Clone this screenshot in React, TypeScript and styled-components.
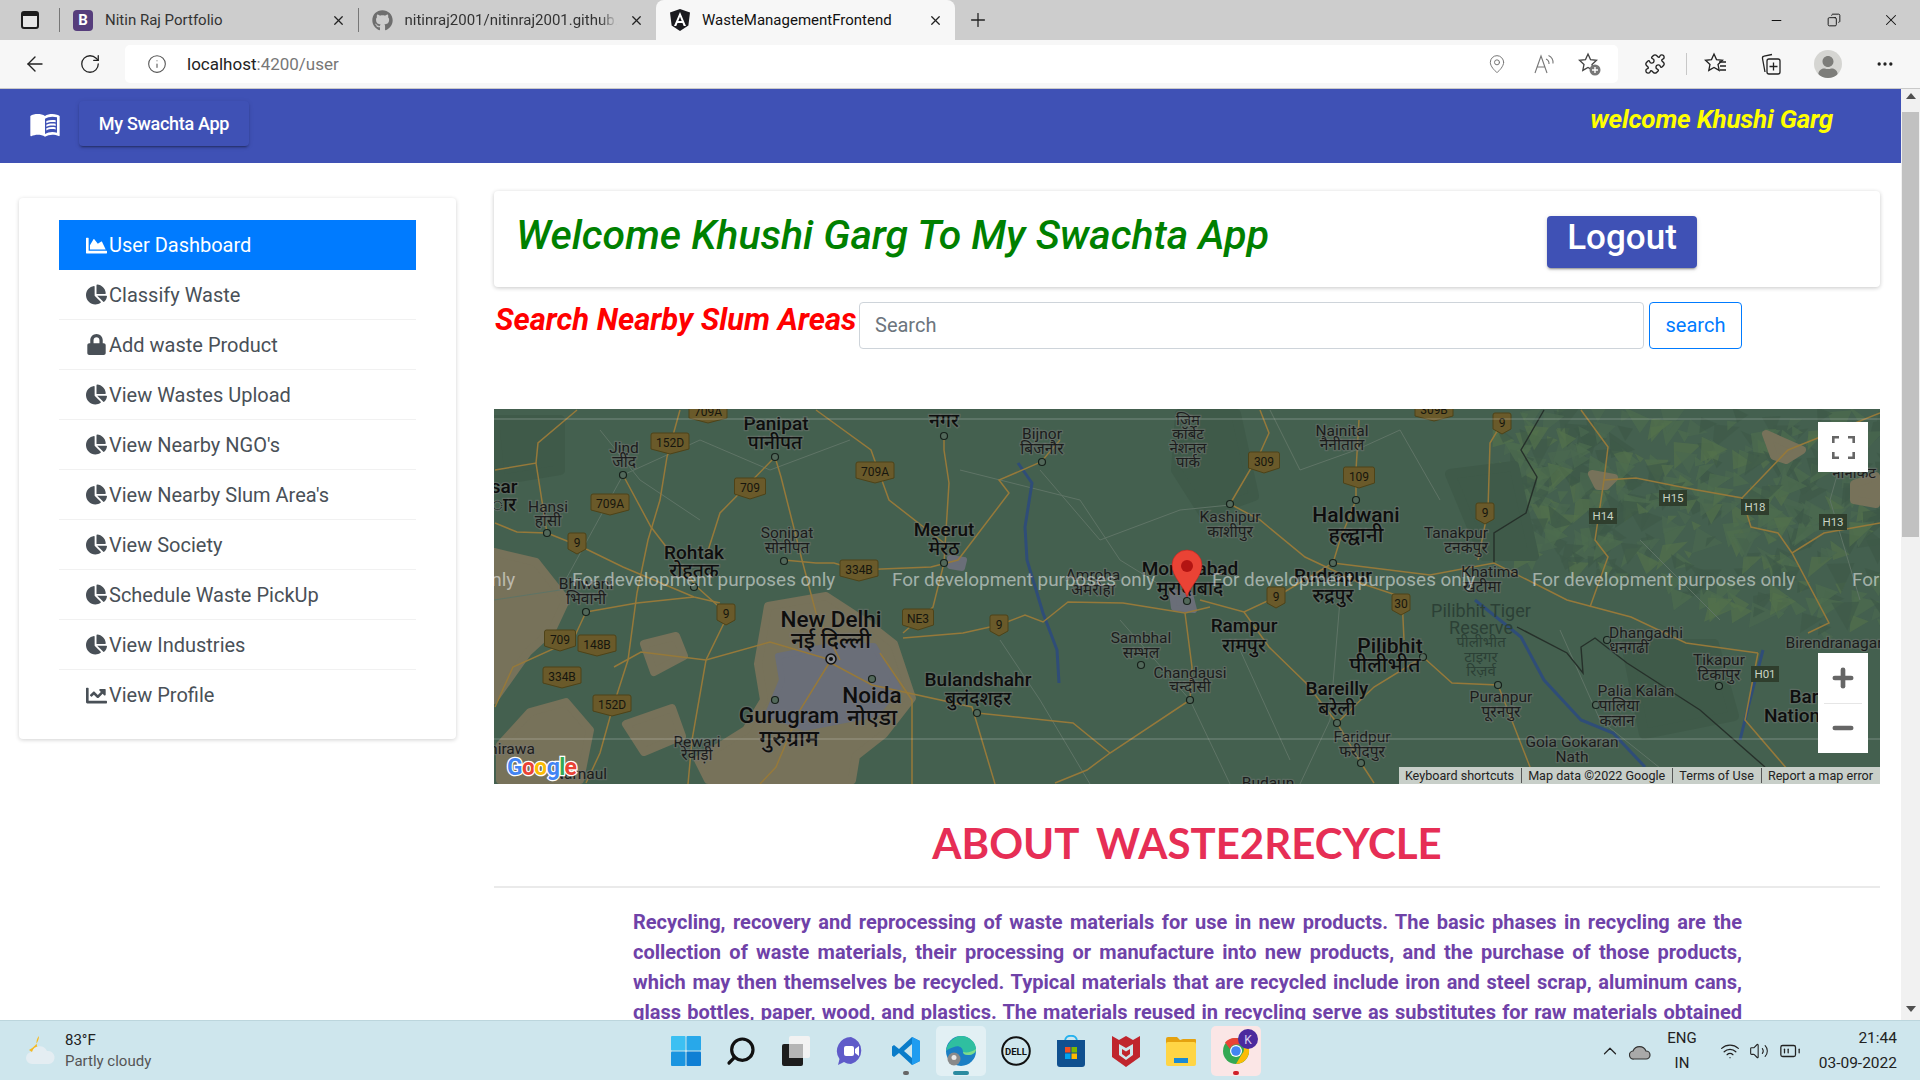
import React from "react";
import styled, { createGlobalStyle } from "styled-components";
import {
  ArrowLeft,
  RotateCw,
  Info,
  MapPin,
  MoreHorizontal,
  X,
  Plus,
  Minus,
  Copy,
  Puzzle,
  Wifi,
  Volume2,
  BatteryMedium,
  ChevronUp,
  Search,
} from "lucide-react";
import { FaChartArea, FaChartPie, FaChartLine, FaLock, FaGithub, FaUser } from "react-icons/fa";
import { MdMenuBook } from "react-icons/md";

const GlobalStyle = createGlobalStyle`
  html, body { margin: 0; padding: 0; height: 100%; overflow: hidden; background: #fff; }
  * { box-sizing: border-box; }
  body { font-family: Roboto, "Liberation Sans", sans-serif; }
`;

const Screen = styled.div`
  width: 1920px;
  height: 1080px;
  display: flex;
  flex-direction: column;
  overflow: hidden;
`;

/* ---------- browser chrome ---------- */
const TabStrip = styled.div`
  height: 40px;
  flex: none;
  display: flex;
  align-items: stretch;
  background: #cdcdcd;
`;
const TabMenu = styled.div`
  width: 59px;
  display: flex;
  align-items: center;
  justify-content: center;
`;
const SideTabIcon = styled.div`
  width: 18px;
  height: 18px;
  border: 2px solid #1c1c1c;
  border-top-width: 5px;
  border-radius: 3px;
  background: #e6e6e6;
`;
const Tab = styled.div<{ $active?: boolean }>`
  width: 298.5px;
  display: flex;
  align-items: center;
  gap: 12px;
  padding: 0 12px 0 14px;
  font-size: 15px;
  color: ${(p) => (p.$active ? "#111" : "#333")};
  background: ${(p) => (p.$active ? "#f7f7f7" : "transparent")};
  border-radius: ${(p) => (p.$active ? "8px 8px 0 0" : "0")};
  position: relative;
  &::before {
    content: "";
    display: ${(p) => (p.$active ? "none" : "block")};
    position: absolute;
    left: 0;
    top: 8px;
    bottom: 8px;
    width: 1px;
    background: #777;
  }
`;
const TabLabel = styled.span<{ $fade?: boolean }>`
  flex: 1;
  overflow: hidden;
  white-space: nowrap;
  ${(p) => (p.$fade ? "mask-image: linear-gradient(to right, #000 92%, transparent);" : "")}
`;
const BootstrapIcon = styled.span`
  width: 20px;
  height: 21px;
  flex: none;
  border-radius: 4px;
  background: #563d7c;
  color: #fff;
  font-size: 15px;
  font-weight: 700;
  display: flex;
  align-items: center;
  justify-content: center;
`;
const NewTab = styled.div`
  width: 46px;
  display: flex;
  align-items: center;
  justify-content: center;
`;
const WindowButtons = styled.div`
  margin-left: auto;
  display: flex;
  align-items: center;
`;
const WindowButton = styled.div`
  width: 57.5px;
  display: flex;
  justify-content: center;
`;
const AddressBar = styled.div`
  height: 49px;
  flex: none;
  display: flex;
  align-items: center;
  padding-left: 7px;
  background: #f7f7f7;
  border-bottom: 1px solid #c9c9c9;
`;
const ToolSlot = styled.div<{ $w: number }>`
  width: ${(p) => p.$w}px;
  flex: none;
  height: 38px;
  display: flex;
  align-items: center;
  justify-content: center;
  color: #222;
`;
const Omnibox = styled.div`
  width: 1493px;
  height: 38px;
  margin: 0 6px 0 8px;
  background: #fff;
  border-radius: 5px;
  display: flex;
  align-items: center;
  padding-left: 22px;
`;
const Url = styled.div`
  margin-left: 20px;
  font-size: 17px;
  color: #777;
  flex: 1;
  b {
    font-weight: 400;
    color: #222;
  }
`;
const ToolDivider = styled.div`
  width: 1px;
  height: 22px;
  background: #c8c8c8;
`;
const Avatar = styled.div`
  width: 28px;
  height: 28px;
  border-radius: 50%;
  background: #d5d5d2;
  color: #7d7d7a;
  display: flex;
  align-items: flex-end;
  justify-content: center;
  overflow: hidden;
`;

/* ---------- page ---------- */
const Viewport = styled.div`
  flex: 1;
  min-height: 0;
  display: flex;
`;
const Page = styled.div`
  flex: 1;
  min-width: 0;
  overflow: hidden;
`;
const ScrollTrack = styled.div`
  width: 19px;
  flex: none;
  background: #f1f1f1;
  display: flex;
  flex-direction: column;
  align-items: center;
  padding-top: 4px;
`;
const Arrow = styled.div<{ $down?: boolean }>`
  width: 0;
  height: 0;
  border-left: 5px solid transparent;
  border-right: 5px solid transparent;
  ${(p) => (p.$down ? "border-top: 6px solid #505050;" : "border-bottom: 6px solid #505050;")}
  ${(p) => (p.$down ? "margin-top: auto; margin-bottom: 8px;" : "")}
`;
const ScrollThumb = styled.div`
  width: 17px;
  height: 425px;
  margin-top: 13px;
  background: #c1c1c1;
`;
const NavBar = styled.div`
  height: 74px;
  background: #3f51b5;
  display: flex;
  align-items: flex-start;
  padding: 12px 68px 0 29px;
`;
const BrandIcon = styled.div`
  width: 32px;
  height: 45px;
  color: #fff;
  display: flex;
  align-items: center;
  justify-content: center;
`;
const BrandButton = styled.div`
  margin-left: 18px;
  width: 170px;
  height: 45px;
  border-radius: 4px;
  background: #3f51b5;
  box-shadow: 0 3px 1px -2px rgba(0, 0, 0, 0.2), 0 2px 2px 0 rgba(0, 0, 0, 0.14), 0 1px 5px 0 rgba(0, 0, 0, 0.12);
  color: #fff;
  font-size: 18px;
  font-weight: 500;
  letter-spacing: -0.3px;
  display: flex;
  align-items: center;
  justify-content: center;
`;
const Greeting = styled.div`
  margin-left: auto;
  font-size: 26px;
  font-weight: 700;
  font-style: italic;
  color: #ffff00;
  letter-spacing: -0.2px;
  line-height: 36px;
`;
const Columns = styled.div`
  display: flex;
  align-items: flex-start;
  padding: 28px 21px 0 19px;
  gap: 38px;
`;
const SideCard = styled.div`
  width: 437px;
  flex: none;
  margin-top: 7px;
  padding: 22px 40px 19px;
  background: #fff;
  border-radius: 4px;
  box-shadow: 0 1px 4px rgba(0, 0, 0, 0.18);
`;
const SideItem = styled.div<{ $active?: boolean }>`
  height: 50px;
  display: flex;
  align-items: center;
  padding-left: 27px;
  font-size: 20px;
  color: ${(p) => (p.$active ? "#fff" : "#495057")};
  background: ${(p) => (p.$active ? "#007bff" : "transparent")};
  border-bottom: ${(p) => (p.$active ? "none" : "1px solid #f1f1f1")};
  &:last-child {
    border-bottom: none;
  }
`;
const SideGlyph = styled.span`
  width: 23px;
  flex: none;
  display: flex;
  justify-content: flex-start;
  font-size: 21px;
`;
const Main = styled.div`
  width: 1386px;
  flex: none;
`;
const HeaderCard = styled.div`
  height: 96px;
  background: #fff;
  border-radius: 4px;
  box-shadow: 0 1px 4px rgba(0, 0, 0, 0.22);
  display: flex;
  align-items: flex-start;
  padding: 21px 183px 0 22px;
`;
const Title = styled.h1`
  margin: 0;
  flex: 1;
  font-size: 41px;
  line-height: 46px;
  font-weight: 500;
  font-style: italic;
  color: #008000;
`;
const LogoutButton = styled.button`
  width: 150px;
  height: 52px;
  margin-top: 4px;
  border: none;
  border-radius: 4px;
  background: #3f51b5;
  color: #fff;
  font: 500 35px Roboto, sans-serif;
  padding: 0 0 10px;
  box-shadow: 0 3px 1px -2px rgba(0, 0, 0, 0.2), 0 2px 2px 0 rgba(0, 0, 0, 0.14), 0 1px 5px 0 rgba(0, 0, 0, 0.12);
`;
const SearchRow = styled.div`
  display: flex;
  align-items: flex-start;
  margin-top: 15px;
  gap: 5px;
`;
const SearchTitle = styled.h3`
  margin: 0;
  width: 360px;
  flex: none;
  padding-left: 1px;
  font-size: 31px;
  line-height: 36px;
  font-weight: 700;
  font-style: italic;
  color: #ff0000;
  white-space: nowrap;
`;
const SearchInput = styled.input`
  width: 785px;
  height: 47px;
  border: 1px solid #ced4da;
  border-radius: 4px;
  padding: 0 15px 2px;
  font: 400 20px Roboto, sans-serif;
  color: #495057;
  &::placeholder {
    color: #6c757d;
    opacity: 1;
  }
`;
const SearchButton = styled.button`
  width: 93px;
  height: 47px;
  border: 1px solid #007bff;
  border-radius: 4px;
  background: #fff;
  color: #007bff;
  padding: 0 0 2px;
  font: 400 20px Roboto, sans-serif;
`;
const MapFrame = styled.div`
  position: relative;
  width: 1386px;
  height: 375px;
  margin-top: 60px;
  overflow: hidden;
  background: #44604f;
`;
const MapSvg = styled.svg`
  display: block;
  width: 100%;
  height: 100%;
  font-family: Roboto, "Noto Sans", sans-serif;
`;
const MapControl = styled.div<{ $bottom?: boolean }>`
  position: absolute;
  right: 12px;
  top: ${(p) => (p.$bottom ? 244 : 13)}px;
  width: 50px;
  height: ${(p) => (p.$bottom ? 100 : 50)}px;
  background: #fff;
  display: flex;
  flex-direction: column;
  align-items: center;
  justify-content: center;
  color: #666;
`;
const ZoomCell = styled.div`
  height: 50px;
  width: 100%;
  display: flex;
  align-items: center;
  justify-content: center;
  & + & {
    position: relative;
    &::before {
      content: "";
      position: absolute;
      top: 0;
      left: 6px;
      right: 6px;
      height: 1px;
      background: #e6e6e6;
    }
  }
`;
const Attribution = styled.div`
  position: absolute;
  right: 0;
  bottom: 0;
  height: 17px;
  display: flex;
  align-items: center;
  background: #c8cfc9;
  font-size: 12.6px;
  color: #222;
`;
const AttributionItem = styled.span`
  padding: 0 7px 0 6px;
  white-space: nowrap;
  & + & {
    border-left: 1px solid #555;
  }
`;
const AboutTitle = styled.h2`
  margin: 39px 0 0;
  height: 47px;
  font-family: Lato, sans-serif;
  font-size: 42px;
  line-height: 40px;
  font-weight: 700;
  text-align: center;
  color: #e62e55;
  word-spacing: 8px;
`;
const Rule = styled.div`
  height: 2px;
  margin-top: 16px;
  background: #eaeaea;
`;
const AboutText = styled.p`
  margin: 19px 138px 0 139px;
  font-size: 20px;
  line-height: 30px;
  font-weight: 700;
  color: #6f42a8;
  text-align: justify;
`;

/* ---------- taskbar ---------- */
const Taskbar = styled.div`
  height: 60px;
  flex: none;
  display: flex;
  align-items: center;
  background: #cee6ed;
  border-top: 1px solid #bcd6dd;
`;
const Weather = styled.div`
  width: 661px;
  flex: none;
  display: flex;
  align-items: center;
  padding-left: 24px;
  gap: 9px;
`;
const WeatherText = styled.div`
  font-size: 15px;
  line-height: 21px;
  color: #555;
  b {
    display: block;
    font-weight: 400;
    color: #222;
  }
`;
const TaskIcons = styled.div`
  display: flex;
  gap: 5px;
`;
const TaskSlot = styled.div<{ $tint?: string }>`
  width: 50px;
  height: 50px;
  border-radius: 5px;
  background: ${(p) => p.$tint || "transparent"};
  display: flex;
  align-items: center;
  justify-content: center;
  position: relative;
`;
const RunDot = styled.span<{ $color: string; $wide?: boolean }>`
  position: absolute;
  bottom: 1px;
  left: 50%;
  transform: translateX(-50%);
  width: ${(p) => (p.$wide ? 16 : 6)}px;
  height: 4px;
  border-radius: 2px;
  background: ${(p) => p.$color};
`;
const Tray = styled.div`
  margin-left: auto;
  display: flex;
  align-items: center;
  padding-right: 23px;
  color: #222;
`;
const TraySlot = styled.div<{ $w: number }>`
  width: ${(p) => p.$w}px;
  display: flex;
  justify-content: center;
`;
const TrayLang = styled.div`
  width: 46px;
  margin: 0 10px 0 4px;
  font-size: 15px;
  line-height: 25px;
  text-align: center;
`;
const Clock = styled.div`
  margin-left: 7px;
  width: 84px;
  font-size: 15.5px;
  line-height: 25px;
  text-align: right;
`;

/* ---------- map data, in page pixels ---------- */
type Label = [string, number, number, number];
const labels: Label[] = [
  ["Panipat", 776, 430, 19], ["पानीपत", 775, 449, 19], ["Jind", 624, 453, 15.5], ["जींद", 624, 467, 15.5],
  ["sar", 504, 493, 19], ["ार", 504, 511, 19], ["Hansi", 548, 512, 15.5], ["हांसी", 548, 526, 15.5],
  ["Sonipat", 787, 538, 15.5], ["सोनीपत", 787, 553, 15.5], ["Rohtak", 694, 559, 19], ["रोहतक", 694, 577, 19],
  ["Bhiwani", 586, 589, 15.5], ["भिवानी", 586, 604, 15.5], ["Meerut", 944, 536, 19], ["मेरठ", 944, 555, 19],
  ["Bijnor", 1042, 439, 15.5], ["बिजनौर", 1042, 454, 15.5], ["नगर", 944, 427, 19],
  ["New Delhi", 831, 627, 22.5], ["नई दिल्ली", 831, 648, 22.5], ["Noida", 872, 703, 22.5], ["नोएडा", 872, 725, 22.5],
  ["Gurugram", 789, 723, 22.5], ["गुरुग्राम", 789, 746, 22.5], ["Bulandshahr", 978, 686, 19], ["बुलंदशहर", 978, 705, 19],
  ["Sambhal", 1141, 643, 15.5], ["सम्भल", 1141, 658, 15.5], ["Chandausi", 1190, 678, 15.5], ["चन्दौसी", 1190, 692, 15.5],
  ["Rewari", 697, 747, 15.5], ["रेवाड़ी", 697, 760, 15.5], ["hirawa", 512, 754, 15.5], ["Narnaul", 580, 779, 15.5],
  ["Amroha", 1093, 580, 15.5], ["अमरोहा", 1093, 595, 15.5], ["Moradabad", 1190, 575, 19], ["मुरादाबाद", 1190, 595, 19],
  ["जिम", 1188, 425, 15], ["कॉर्बेट", 1188, 439, 15], ["नेशनल", 1188, 453, 15], ["पार्क", 1188, 467, 15],
  ["Nainital", 1342, 436, 15.5], ["नैनीताल", 1342, 450, 15.5], ["Kashipur", 1230, 522, 15.5], ["काशीपुर", 1230, 537, 15.5],
  ["Haldwani", 1356, 522, 21], ["हल्द्वानी", 1356, 542, 21], ["Tanakpur", 1456, 538, 15.5], ["टनकपुर", 1466, 553, 15.5],
  ["Khatima", 1490, 577, 15.5], ["खटीमा", 1482, 592, 15.5], ["Rudrapur", 1333, 582, 19], ["रुद्रपुर", 1333, 602, 19],
  ["Rampur", 1244, 632, 19], ["रामपुर", 1244, 652, 19], ["Pilibhit", 1390, 653, 21], ["पीलीभीत", 1385, 672, 21],
  ["Dhangadhi", 1646, 638, 15.5], ["धनगढी", 1629, 653, 15.5], ["Tikapur", 1719, 665, 15.5], ["टिकापुर", 1719, 680, 15.5],
  ["Birendranagar", 1834, 648, 15.5], ["Palia Kalan", 1636, 696, 15.5], ["पालिया", 1619, 711, 15.5], ["कलान", 1617, 726, 15.5],
  ["Puranpur", 1501, 702, 15.5], ["पूरनपुर", 1501, 717, 15.5], ["Bareilly", 1337, 695, 19], ["बरेली", 1337, 715, 19],
  ["Faridpur", 1362, 742, 15.5], ["फरीदपुर", 1362, 757, 15.5], ["Gola Gokaran", 1572, 747, 15.5], ["Nath", 1572, 762, 15.5],
  ["Budaun", 1268, 788, 15.5], ["Bar", 1804, 703, 19], ["Nation", 1792, 722, 19], ["नानाकट", 1854, 478, 15],
];
const parkLabels: Label[] = [
  ["Pilibhit Tiger", 1481, 617, 18], ["Reserve", 1481, 634, 18], ["पीलीभीत", 1481, 647, 15],
  ["टाइगर", 1481, 662, 15], ["रिज़र्व", 1481, 676, 15],
];
const shields: [string, number, number][] = [
  ["709A", 708, 412], ["152D", 670, 443], ["709A", 875, 472], ["709", 750, 488], ["709A", 610, 504],
  ["9", 577, 543], ["334B", 859, 570], ["9", 726, 614], ["NE3", 918, 619], ["9", 999, 625],
  ["709", 560, 640], ["148B", 597, 645], ["334B", 562, 677], ["152D", 612, 705],
  ["309", 1264, 462], ["109", 1359, 477], ["309B", 1434, 410], ["9", 1502, 423],
  ["9", 1485, 513], ["9", 1276, 597], ["30", 1401, 604],
];
const stateRoutes: [string, number, number][] = [
  ["H15", 1673, 498], ["H14", 1603, 516], ["H18", 1755, 507], ["H13", 1833, 522], ["H01", 1765, 674],
];
const roads: string[] = [
  "680,410 667,457 660,500 648,540 637,593 628,660 612,710 600,753 586,783",
  "775,457 781,477 802,560 816,613 840,660",
  "784,560 816,563 834,563 857,570 931,567 958,560 1009,493 999,480 1041,462 1060,440",
  "944,437 944,450 949,483 944,563 933,607 903,633",
  "903,638 963,633 999,625 1025,615 1043,622 1068,602 1123,603 1185,613 1210,607",
  "1200,600 1244,612 1276,597 1333,563 1340,540 1356,500 1356,470 1359,420",
  "1230,504 1260,453 1269,433 1260,410",
  "1230,504 1260,520 1305,557 1360,583 1402,597 1404,640",
  "1333,563 1430,575 1494,563 1567,600 1631,617 1686,643 1758,653",
  "1423,657 1452,683 1498,685 1530,767 1535,784",
  "1502,423 1490,443 1488,510 1478,560",
  "1581,410 1608,447 1604,480 1595,540 1608,557 1590,607",
  "1604,480 1636,478 1686,488 1742,498 1751,527 1778,533 1792,553 1829,623 1808,633",
  "1742,498 1788,450 1880,413",
  "1792,553 1824,533 1880,523",
  "1185,613 1192,667 1190,700 1110,753 1087,770 1055,783",
  "1337,723 1306,683 1269,647 1244,612",
  "1337,723 1361,763 1374,783",
  "1423,657 1374,687 1337,723",
  "623,475 651,527 697,587 726,613 724,623 706,660 692,740 688,784",
  "547,533 582,547 623,567 694,597 720,603",
  "586,612 637,603 694,597",
  "586,612 573,640 513,667 495,707",
  "547,533 517,532 495,523",
  "495,470 536,463 547,533",
  "536,463 538,443 577,410",
  "614,667 641,652 706,660 770,642 831,660",
  "775,457 720,513 706,557",
  "816,410 871,450 889,500 944,543",
  "831,660 800,710 776,767 760,784",
  "831,663 872,685 972,707 995,784",
  "880,653 912,700 912,784",
  "977,713 1073,723 1110,753",
  "1758,653 1745,720 1800,784",
];
const minorRoads: string[] = [
  "494,600 560,590 623,475 700,440 770,470 850,440",
  "960,470 1080,500 1120,560 1185,600",
  "1040,470 1100,540 1180,510 1230,505",
  "1120,620 1190,700 1230,784",
  "1000,640 1040,700 1090,784",
  "1270,410 1300,470 1356,450 1400,430 1440,500",
  "1340,600 1330,720 1300,784",
  "1560,630 1600,720 1680,784",
  "1240,650 1290,760",
  "600,430 640,480 700,520",
  "1640,540 1720,620",
  "1850,430 1830,500 1860,600",
];
const rivers: string[] = [
  "1018,463 1032,483 1025,527 1027,560 1043,613 1057,650 1059,683",
  "1475,600 1521,637 1544,680 1581,720 1613,733 1645,767",
  "1740,740 1750,700 1763,650",
];
const borders: string[] = [
  "1544,410 1521,450 1537,477 1526,513 1494,533 1494,563",
  "1517,627 1567,653 1583,673 1581,647 1595,638 1627,663 1700,710 1765,767",
];
const tanAreas: string[] = [
  "494,552 536,562 566,600 552,630 528,652 494,700",
  "500,745 530,712 566,702 590,730 580,780 500,780",
  "768,606 826,596 866,622 894,644 912,698 884,734 856,756 852,780 708,780 698,760 746,730 764,700 758,664",
  "644,644 676,636 684,656 654,672",
  "626,724 672,708 682,736 644,752",
  "1592,474 1614,478 1606,486 1598,486",
  "1766,434 1802,450 1786,460 1774,456",
  "1854,484 1876,476 1876,504 1854,500",
];
const urbanAreas: string[] = [
  "778,656 830,646 874,646 898,688 876,714 804,728 768,714 782,680",
  "1172,592 1190,594 1194,610 1174,608",
  "950,558 964,560 962,568 950,566",
];
const shadeAreas: string[] = [
  "1180,414 1236,414 1254,496 1204,514 1176,470",
  "1450,474 1514,466 1534,556 1484,556",
  "1626,644 1714,644 1734,716 1644,734",
  "494,420 560,420 560,470 500,480",
];

// mottled hills in the north-east: small triangles from a fixed seed
function hillFacets() {
  const out: { points: string; fill: string }[] = [];
  const tones = ["#3f5a49", "#4a6850", "#4d6c4f", "#52704c", "#3d5847"];
  let seed = 2022;
  const next = () => {
    seed = (seed * 16807) % 2147483647;
    return seed / 2147483647;
  };
  for (let i = 0; i < 420; i++) {
    const x = 1490 + next() * 400;
    const y = 405 + next() * 240 * (1 - (1880 - x) / 900);
    const s = 8 + next() * 20;
    out.push({
      points: `${x},${y} ${x + s},${y + s * (next() - 0.2)} ${x + s * (next() - 0.3)},${y + s}`,
      fill: tones[Math.floor(next() * tones.length)],
    });
  }
  return out;
}
const facets = hillFacets();

const places: [number, number][] = [
  [775, 457], [623, 475], [547, 533], [784, 561], [944, 563], [1042, 462], [944, 436],
  [586, 612], [694, 587], [872, 679], [775, 700], [977, 713], [1141, 665], [1190, 700], [1187, 601],
  [1095, 582], [1230, 504], [1333, 563], [1423, 657], [1337, 723], [1498, 685], [1361, 763], [1356, 500],
  [1607, 640], [1596, 705], [1719, 686],
];

function MapDrawing() {
  return (
    <MapSvg viewBox="494 409 1386 375" preserveAspectRatio="none">
      {facets.map((f) => <polygon key={f.points} points={f.points} fill={f.fill} opacity=".7" />)}
      {shadeAreas.map((p) => (
        <polygon key={p} points={p} fill="#3f5a49" stroke="#3f5a49" strokeWidth="10" strokeLinejoin="round" />
      ))}
      {tanAreas.map((p) => (
        <polygon key={p} points={p} fill="#77725a" stroke="#77725a" strokeWidth="8" strokeLinejoin="round" />
      ))}
      {urbanAreas.map((p) => (
        <polygon key={p} points={p} fill="#6a6e78" stroke="#6a6e78" strokeWidth="6" strokeLinejoin="round" />
      ))}
      {minorRoads.map((p) => <polyline key={p} points={p} fill="none" stroke="#5f7466" strokeWidth="1" />)}
      {rivers.map((p) => <polyline key={p} points={p} fill="none" stroke="#2f4d78" strokeWidth="3" />)}
      {borders.map((p) => <polyline key={p} points={p} fill="none" stroke="#26302a" strokeWidth="1.4" />)}
      {roads.map((p) => <polyline key={p} points={p} fill="none" stroke="#96793a" strokeWidth="1.5" />)}
      {places.map(([x, y]) => (
        <circle key={`${x}-${y}`} cx={x} cy={y} r="3.5" fill="#52685a" stroke="#16201a" strokeWidth="1.2" />
      ))}
      <circle cx="831" cy="659" r="5" fill="#8a8d92" stroke="#111" strokeWidth="1.5" />
      <circle cx="831" cy="659" r="2" fill="#111" />
      {shields.map(([t, x, y]) => {
        const w = t.length > 2 ? 10 + t.length * 7 : 18;
        return (
          <g key={`${t}-${x}`}>
            <path
              d={`M${x - w / 2 + 2} ${y - 10}h${w - 4}q2 0 2 2v14l-${w / 2} 5l-${w / 2} -5v-14q0 -2 2 -2z`}
              fill="#6a5a2a"
              stroke="#4e4318"
            />
            <text x={x} y={y + 4} fontSize="12" textAnchor="middle" fill="#16160e">{t}</text>
          </g>
        );
      })}
      {stateRoutes.map(([t, x, y]) => (
        <g key={t}>
          <rect x={x - 14} y={y - 8} width="28" height="16" fill="#2f3e2d" />
          <text x={x} y={y + 4} fontSize="11.5" textAnchor="middle" fill="#c9d4c4">{t}</text>
        </g>
      ))}
      {labels.map(([t, x, y, s]) => (
        <text
          key={`${t}-${x}`}
          x={x}
          y={y}
          fontSize={s}
          fontWeight={s >= 19 ? 500 : 400}
          textAnchor="middle"
          fill={s >= 19 ? "#0e0e0e" : "#1c1c1c"}
          stroke="rgba(120,120,120,.45)"
          strokeWidth="2.5"
          paintOrder="stroke"
        >
          {t}
        </text>
      ))}
      {parkLabels.map(([t, x, y, s]) => (
        <text key={`${t}-${x}`} x={x} y={y} fontSize={s} textAnchor="middle" fill="#2c4036">{t}</text>
      ))}
      <line x1="494" y1="419" x2="1880" y2="419" stroke="rgba(255,255,255,.28)" />
      <line x1="494" y1="739" x2="1880" y2="739" stroke="rgba(255,255,255,.28)" />
      {[252, 572, 892, 1212, 1532, 1852].map((x) => (
        <text key={x} x={x} y="586" fontSize="18.9" fill="rgba(255,255,255,.52)">For development purposes only</text>
      ))}
      <path
        d="M1187 597c-3-11-15-20-15-32a15 15 0 0 1 30 0c0 12-12 21-15 32z"
        fill="#ea4335"
        stroke="#c5221f"
        strokeWidth=".6"
      />
      <circle cx="1187" cy="566" r="6" fill="#b31412" />
      <text x="507" y="775" fontSize="23" fontWeight="700" stroke="#fff" strokeWidth="2.5" paintOrder="stroke" textLength="70">
        <tspan fill="#4285f4">G</tspan>
        <tspan fill="#ea4335">o</tspan>
        <tspan fill="#fbbc05">o</tspan>
        <tspan fill="#4285f4">g</tspan>
        <tspan fill="#34a853">l</tspan>
        <tspan fill="#ea4335">e</tspan>
      </text>
    </MapSvg>
  );
}

/* ---------- small drawn icons ---------- */
function AngularIcon() {
  return (
    <svg width="20" height="22" viewBox="0 0 20 22" style={{ flex: "none" }}>
      <path d="M10 0L0 3.6l1.6 13L10 22l8.4-5.4 1.6-13z" fill="#1b1b1f" />
      <path d="M10 3L4 17h2.3l1.2-3h5l1.2 3H16zm-1.7 9L10 7.8l1.7 4.2z" fill="#fff" />
    </svg>
  );
}
function FullscreenIcon() {
  return (
    <svg width="23" height="23" viewBox="0 0 23 23" fill="none" stroke="#666" strokeWidth="2.600">
      <path d="M1.300 7V1.300H7M16 1.300h5.700V7M21.700 16v5.700H16M7 21.700H1.300V16" />
    </svg>
  );
}
const STAR = "M10 2l2.500 5.600 6 .7-4.500 4.100 1.200 6-5.200-3-5.200 3 1.200-6L1.500 8.300l6-.7z";
function ReadAloudIcon() {
  return (
    <svg width="24" height="24" viewBox="0 0 24 24" fill="none" stroke="#777" strokeWidth="1.100">
      <path d="M3 21L9 4l6 17M5.300 15h7.400M14 7a5 5 0 0 1 3 5M16.500 3.500a8 8 0 0 1 4.500 8" />
    </svg>
  );
}
function FavAddIcon() {
  return (
    <svg width="24" height="24" viewBox="0 0 24 24">
      <path d={STAR} fill="none" stroke="#444" strokeWidth="1.300" />
      <circle cx="17" cy="18" r="5.500" fill="#777" />
      <path d="M14 18h6M17 15v6" stroke="#fff" strokeWidth="1.400" />
    </svg>
  );
}
function FavoritesIcon() {
  return (
    <svg width="24" height="24" viewBox="0 0 24 24" fill="none" stroke="#222" strokeWidth="1.300">
      <path d={STAR} />
      <path d="M15 10h7M16 14h6M16 18h6" />
    </svg>
  );
}
function CollectionsIcon() {
  return (
    <svg width="24" height="24" viewBox="0 0 24 24" fill="none" stroke="#222" strokeWidth="1.300">
      <path d="M6 20L3.500 6.500a2 2 0 0 1 1.600-2.300L13 2.500" />
      <rect x="8" y="7" width="13" height="15" rx="2" />
      <path d="M14.500 10.500v8M10.500 14.500h8" />
    </svg>
  );
}
function WindowsIcon() {
  return (
    <svg width="30" height="30" viewBox="0 0 30 30">
      <rect width="14.5" height="14.5" rx="1" fill="#3cc0f2" />
      <rect x="15.5" width="14.5" height="14.5" rx="1" fill="#28a8ea" />
      <rect y="15.5" width="14.5" height="14.5" rx="1" fill="#1a95e0" />
      <rect x="15.5" y="15.5" width="14.5" height="14.5" rx="1" fill="#0f7fd4" />
    </svg>
  );
}
function TaskViewIcon() {
  return (
    <svg width="30" height="30" viewBox="0 0 30 30">
      <rect x="1" y="8" width="21" height="22" rx="2" fill="#1d1d1d" />
      <rect x="8" y="0" width="21" height="22" rx="2" fill="#f2f2f2" />
      <rect x="8" y="8" width="14" height="14" fill="#b5b5b5" />
    </svg>
  );
}
function ChatIcon() {
  return (
    <svg width="30" height="30" viewBox="0 0 30 30">
      <path d="M15 1a14 14 0 0 1 0 27c-3 0-5-.8-7-2l-6 3 1.500-6A14 14 0 0 1 15 1z" fill="#5f5bc9" />
      <rect x="8" y="10" width="10" height="10" rx="2" fill="#fff" />
      <path d="M19 13l4-3v10l-4-3z" fill="#fff" />
    </svg>
  );
}
function CodeIcon() {
  return (
    <svg width="30" height="30" viewBox="0 0 30 30">
      <path d="M21 1l8 4v20l-8 4-13-12-5 4-2-1.500V10.500L3 9l5 4z" fill="#0a7cc9" />
      <path d="M21 8l-8 7 8 7z" fill="#cee6ed" />
      <path d="M21 1l8 4v20l-8 4z" fill="#1f9cf0" />
    </svg>
  );
}
function EdgeIcon() {
  return (
    <svg width="32" height="32" viewBox="0 0 32 32">
      <circle cx="16" cy="16" r="15" fill="#1b7fc4" />
      <path d="M1 16C2 8 9 1 16 1c8 0 15 6 15 13 0 4-4 6-8 6-3 0-5-1-5-3 0-5-5-7-9-5-4 1-7 3-8 4z" fill="#2fbfa0" />
      <path d="M31 14c0 4-4 6-8 6-3 0-5-1-5-3 4 1 9 0 13-3z" fill="#7fdc8a" />
      <circle cx="9" cy="24" r="6.500" fill="#8a8a8a" />
      <circle cx="9" cy="22.500" r="2.500" fill="#e8e8e8" />
    </svg>
  );
}
function DellIcon() {
  return (
    <svg width="30" height="30" viewBox="0 0 30 30">
      <circle cx="15" cy="15" r="13.800" fill="#cee6ed" stroke="#111" strokeWidth="2" />
      <text x="15" y="18.500" fontSize="9.500" fontWeight="700" textAnchor="middle" fill="#111" fontFamily="Roboto, sans-serif">DELL</text>
    </svg>
  );
}
function StoreIcon() {
  return (
    <svg width="30" height="32" viewBox="0 0 30 32">
      <path d="M9 6c0-7 12-7 12 0" fill="none" stroke="#25b2ee" strokeWidth="2" />
      <path d="M1 5h28v24a3 3 0 0 1-3 3H4a3 3 0 0 1-3-3z" fill="#10508f" />
      <rect x="9" y="12" width="5.500" height="5.500" fill="#f25022" />
      <rect x="15.500" y="12" width="5.500" height="5.500" fill="#7fba00" />
      <rect x="9" y="18.500" width="5.500" height="5.500" fill="#00a4ef" />
      <rect x="15.500" y="18.500" width="5.500" height="5.500" fill="#ffb900" />
    </svg>
  );
}
function ShieldIcon() {
  return (
    <svg width="28" height="32" viewBox="0 0 28 32">
      <path d="M0 1l7 4 7-4 7 4 7-4v21L14 32 0 22z" fill="#c0252d" />
      <path d="M7 9l7 4 7-4v11l-7 5-7-5z" fill="#cee6ed" />
      <path d="M10 14l4 2.500 4-2.500v5l-4 3-4-3z" fill="#c0252d" />
    </svg>
  );
}
function FolderIcon() {
  return (
    <svg width="32" height="30" viewBox="0 0 32 30">
      <path d="M1 3a2 2 0 0 1 2-2h9l3 3h-14z" fill="#e5a20f" />
      <path d="M1 4h14l3-1h12a1 1 0 0 1 1 1v6H1z" fill="#e5a20f" />
      <rect x="1" y="6" width="30" height="24" rx="2" fill="#ffd545" />
      <rect x="9" y="22" width="14" height="5" fill="#1a8ad4" />
    </svg>
  );
}
function ChromeIcon() {
  return (
    <svg width="44" height="44" viewBox="0 0 44 44">
      <g transform="translate(9 9)">
        <circle cx="13" cy="13" r="13" fill="#34a853" />
        <path d="M13 0a13 13 0 0 1 11.300 6.500H13A6.500 6.500 0 0 0 7 11L2 4.500A13 13 0 0 1 13 0z" fill="#ea4335" />
        <path d="M24.300 6.500A13 13 0 0 1 13 26l5.600-9.500a6.500 6.500 0 0 0 0-10z" fill="#fbbc05" />
        <circle cx="13" cy="13" r="6" fill="#fff" />
        <circle cx="13" cy="13" r="4.800" fill="#4285f4" />
      </g>
      <circle cx="34" cy="10" r="10" fill="#4b2a9e" />
      <text x="34" y="14.500" fontSize="12" textAnchor="middle" fill="#d8d0f0" fontFamily="Roboto, sans-serif">K</text>
    </svg>
  );
}
function WeatherIcon() {
  return (
    <svg width="32" height="34" viewBox="0 0 32 34">
      <path d="M15 2a10 10 0 0 0 2 15 10 10 0 0 1-12-1C9 14 15 9 15 2z" fill="#f5b921" />
      <path d="M8 30a6 6 0 0 1 0-12 8 8 0 0 1 15-1 6.500 6.500 0 0 1 2 13z" fill="#e4edf2" />
    </svg>
  );
}
function CloudIcon() {
  return (
    <svg width="22" height="20" viewBox="0 0 22 20">
      <path d="M5 18a4 4 0 0 1-1-8 7 7 0 0 1 13 0 4 4 0 0 1 0 8z" fill="#a9a9a9" stroke="#333" strokeWidth="1.2" />
    </svg>
  );
}

const sideItems: { label: string; icon: React.ReactNode; active?: boolean }[] = [
  { label: "User Dashboard", icon: <FaChartArea />, active: true },
  { label: "Classify Waste", icon: <FaChartPie /> },
  { label: "Add waste Product", icon: <FaLock /> },
  { label: "View Wastes Upload", icon: <FaChartPie /> },
  { label: "View Nearby NGO's", icon: <FaChartPie /> },
  { label: "View Nearby Slum Area's", icon: <FaChartPie /> },
  { label: "View Society", icon: <FaChartPie /> },
  { label: "Schedule Waste PickUp", icon: <FaChartPie /> },
  { label: "View Industries", icon: <FaChartPie /> },
  { label: "View Profile", icon: <FaChartLine /> },
];

const ABOUT =
  "Recycling, recovery and reprocessing of waste materials for use in new products. The basic phases in recycling are the collection of waste materials, their processing or manufacture into new products, and the purchase of those products, which may then themselves be recycled. Typical materials that are recycled include iron and steel scrap, aluminum cans, glass bottles, paper, wood, and plastics. The materials reused in recycling serve as substitutes for raw materials obtained from such increasingly scarce and expensive natural resources as petroleum, natural gas, coal, mineral ores, and trees.";

export default function App() {
  return (
    <Screen>
      <GlobalStyle />
      <TabStrip>
        <TabMenu>
          <SideTabIcon />
        </TabMenu>
        <Tab>
          <BootstrapIcon>B</BootstrapIcon>
          <TabLabel>Nitin Raj Portfolio</TabLabel>
          <X size={15} color="#222" />
        </Tab>
        <Tab>
          <FaGithub size={21} color="#6e6e6e" style={{ flex: "none" }} />
          <TabLabel $fade>nitinraj2001/nitinraj2001.github.io</TabLabel>
          <X size={15} color="#222" />
        </Tab>
        <Tab $active>
          <AngularIcon />
          <TabLabel>WasteManagementFrontend</TabLabel>
          <X size={15} color="#222" />
        </Tab>
        <NewTab>
          <Plus size={22} strokeWidth={1.4} color="#222" />
        </NewTab>
        <WindowButtons>
          <WindowButton>
            <Minus size={15} strokeWidth={1.6} color="#111" />
          </WindowButton>
          <WindowButton>
            <Copy size={14} strokeWidth={1.6} color="#111" style={{ transform: "scaleX(-1)" }} />
          </WindowButton>
          <WindowButton>
            <X size={18} strokeWidth={1.4} color="#111" />
          </WindowButton>
        </WindowButtons>
      </TabStrip>
      <AddressBar>
        <ToolSlot $w={55}>
          <ArrowLeft size={24} strokeWidth={1.4} />
        </ToolSlot>
        <ToolSlot $w={55}>
          <RotateCw size={22} strokeWidth={1.4} />
        </ToolSlot>
        <Omnibox>
          <Info size={20} strokeWidth={1.3} color="#555" />
          <Url>
            <b>localhost</b>:4200/user
          </Url>
          <ToolSlot $w={48}>
            <MapPin size={20} strokeWidth={1.2} color="#777" />
          </ToolSlot>
          <ToolSlot $w={46}>
            <ReadAloudIcon />
          </ToolSlot>
          <ToolSlot $w={46}>
            <FavAddIcon />
          </ToolSlot>
          <ToolSlot $w={5} />
        </Omnibox>
        <ToolSlot $w={62}>
          <Puzzle size={22} strokeWidth={1.5} />
        </ToolSlot>
        <ToolDivider />
        <ToolSlot $w={58}>
          <FavoritesIcon />
        </ToolSlot>
        <ToolSlot $w={52}>
          <CollectionsIcon />
        </ToolSlot>
        <ToolSlot $w={62}>
          <Avatar>
            <FaUser size={22} />
          </Avatar>
        </ToolSlot>
        <ToolSlot $w={52}>
          <MoreHorizontal size={20} />
        </ToolSlot>
      </AddressBar>

      <Viewport>
        <Page>
          <NavBar>
            <BrandIcon>
              <MdMenuBook size={34} />
            </BrandIcon>
            <BrandButton>My Swachta App</BrandButton>
            <Greeting>welcome Khushi Garg</Greeting>
          </NavBar>
          <Columns>
            <SideCard>
              {sideItems.map((item) => (
                <SideItem key={item.label} $active={item.active}>
                  <SideGlyph>{item.icon}</SideGlyph>
                  {item.label}
                </SideItem>
              ))}
            </SideCard>
            <Main>
              <HeaderCard>
                <Title>Welcome Khushi Garg To My Swachta App</Title>
                <LogoutButton>Logout</LogoutButton>
              </HeaderCard>
              <SearchRow>
                <SearchTitle>Search Nearby Slum Areas</SearchTitle>
                <SearchInput placeholder="Search" />
                <SearchButton>search</SearchButton>
              </SearchRow>
              <MapFrame>
                <MapDrawing />
                <MapControl>
                  <FullscreenIcon />
                </MapControl>
                <MapControl $bottom>
                  <ZoomCell>
                    <Plus size={28} strokeWidth={4} />
                  </ZoomCell>
                  <ZoomCell>
                    <Minus size={28} strokeWidth={4} />
                  </ZoomCell>
                </MapControl>
                <Attribution>
                  <AttributionItem>Keyboard shortcuts</AttributionItem>
                  <AttributionItem>Map data ©2022 Google</AttributionItem>
                  <AttributionItem>Terms of Use</AttributionItem>
                  <AttributionItem>Report a map error</AttributionItem>
                </Attribution>
              </MapFrame>
              <AboutTitle>ABOUT WASTE2RECYCLE</AboutTitle>
              <Rule />
              <AboutText>{ABOUT}</AboutText>
            </Main>
          </Columns>
        </Page>
        <ScrollTrack>
          <Arrow />
          <ScrollThumb />
          <Arrow $down />
        </ScrollTrack>
      </Viewport>

      <Taskbar>
        <Weather>
          <WeatherIcon />
          <WeatherText>
            <b>83°F</b>
            Partly cloudy
          </WeatherText>
        </Weather>
        <TaskIcons>
          <TaskSlot><WindowsIcon /></TaskSlot>
          <TaskSlot><Search size={32} strokeWidth={2.4} color="#111" style={{ transform: "scaleX(-1)" }} /></TaskSlot>
          <TaskSlot><TaskViewIcon /></TaskSlot>
          <TaskSlot><ChatIcon /></TaskSlot>
          <TaskSlot><CodeIcon /><RunDot $color="#666" /></TaskSlot>
          <TaskSlot $tint="#e2f0f4"><EdgeIcon /><RunDot $color="#2b8ba0" $wide /></TaskSlot>
          <TaskSlot><DellIcon /></TaskSlot>
          <TaskSlot><StoreIcon /></TaskSlot>
          <TaskSlot><ShieldIcon /></TaskSlot>
          <TaskSlot><FolderIcon /></TaskSlot>
          <TaskSlot $tint="#fbe6e6"><ChromeIcon /><RunDot $color="#d0202a" /></TaskSlot>
        </TaskIcons>
        <Tray>
          <TraySlot $w={30}><ChevronUp size={22} strokeWidth={1.3} /></TraySlot>
          <TraySlot $w={30}><CloudIcon /></TraySlot>
          <TrayLang>ENG<br />IN</TrayLang>
          <TraySlot $w={29}><Wifi size={20} strokeWidth={1.5} /></TraySlot>
          <TraySlot $w={29}><Volume2 size={20} strokeWidth={1.3} /></TraySlot>
          <TraySlot $w={33}><BatteryMedium size={22} strokeWidth={1.4} /></TraySlot>
          <Clock>21:44<br />03-09-2022</Clock>
        </Tray>
      </Taskbar>
    </Screen>
  );
}
